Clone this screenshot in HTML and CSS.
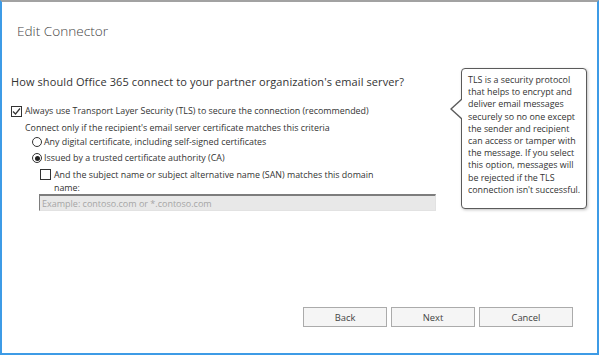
FILE: index.html
```html
<!DOCTYPE html>
<html lang="en">
<head>
    <meta charset="UTF-8">
    <title>Edit Connector</title>
    <link rel="stylesheet" href="styles.css">
</head>
<body>
<div class="window">
    <h1 class="title">Edit Connector</h1>

    <div class="content">
        <p class="question">How should Office 365 connect to your partner organization's email server?</p>

        <div class="option">
            <span class="check checked">
                <svg width="9" height="9" viewBox="0 0 9 9"><path d="M1 4.5 L3.5 7 L8 1.5" fill="none" stroke="#333" stroke-width="1.2"/></svg>
            </span>
            <span>Always use Transport Layer Security (TLS) to secure the connection (recommended)</span>
        </div>
        <div class="sub">
            <p class="hint">Connect only if the recipient's email server certificate matches this criteria</p>
            <div class="option radio-row">
                <span class="radio"></span>
                <span>Any digital certificate, including self-signed certificates</span>
            </div>
            <div class="option radio-row">
                <span class="radio selected"></span>
                <span>Issued by a trusted certificate authority (CA)</span>
            </div>
            <div class="option san">
                <span class="check"></span>
                <span>And the subject name or subject alternative name (SAN) matches this domain name:</span>
            </div>
            <input class="domain" type="text" placeholder="Example: contoso.com or *.contoso.com">
        </div>
    </div>

    <div class="tooltip">
        TLS is a security protocol<br>
        that helps to encrypt and<br>
        deliver email messages<br>
        securely so no one except<br>
        the sender and recipient<br>
        can access or tamper with<br>
        the message. If you select<br>
        this option, messages will<br>
        be rejected if the TLS<br>
        connection isn't successful.
    </div>

    <div class="buttons">
        <button>Back</button>
        <button>Next</button>
        <button class="wide">Cancel</button>
    </div>
</div>
</body>
</html>
```

FILE: styles.css
```css
body {
    margin: 0;
    background: #fff;
}
.window {
    box-sizing: border-box;
    width: 599px;
    height: 355px;
    border: 2px solid #3d9be6;
    border-top-color: #a2a2a2;
    position: relative;
    display: flex;
    flex-direction: column;
    font-family: "Open Sans", "Noto Sans", sans-serif;
    color: #333;
}
.title {
    margin: 19px 0 0 15px;
    font-size: 13.6px;
    font-weight: 300;
    line-height: 20px;
    color: #444;
}
.content {
    padding: 34px 0 0 9px;
    flex: 1;
}
.question {
    margin: 0 0 16px 0;
    font-size: 11px;
    line-height: 14px;
    letter-spacing: 0.1px;
    color: #333;
}
.option {
    display: flex;
    align-items: flex-start;
    gap: 3px;
    font-size: 8.9px;
    line-height: 12px;
}
.check {
    box-sizing: border-box;
    flex: none;
    width: 11px;
    height: 11px;
    margin-top: 1px;
    border: 1px solid #333;
    display: flex;
    align-items: center;
    justify-content: center;
}
.sub {
    padding-left: 14px;
}
.hint {
    margin: 5px 0 2px 0;
    font-size: 8.9px;
    line-height: 12px;
}
.radio-row {
    margin-left: 7px;
    margin-bottom: 4px;
    gap: 2px;
}
.radio {
    box-sizing: border-box;
    flex: none;
    width: 10px;
    height: 10px;
    margin-top: 1px;
    border: 1px solid #333;
    border-radius: 50%;
    display: flex;
    align-items: center;
    justify-content: center;
}
.radio.selected::after {
    content: "";
    width: 5px;
    height: 5px;
    border-radius: 50%;
    background: #222;
}
.san {
    margin: 4px 0 0 15px;
    width: 349px;
    line-height: 13px;
}
.domain {
    box-sizing: border-box;
    display: block;
    width: 397px;
    height: 17px;
    margin: 0 0 0 14px;
    padding: 0 2px;
    border: 1px solid #e2e2e2;
    border-top: 2px solid #7d7d7d;
    border-left: 1px solid #7d7d7d;
    background: #e8e8e8;
    font-family: "Open Sans", sans-serif;
    font-size: 9px;
}
.domain::placeholder {
    color: #a6a6a6;
}
.tooltip {
    position: absolute;
    left: 459px;
    top: 66px;
    width: 126px;
    height: 141px;
    box-sizing: border-box;
    padding: 5px 0 0 6px;
    border: 1px solid #5a5a5a;
    border-radius: 4px;
    box-shadow: 1px 1px 3px rgba(0, 0, 0, 0.25);
    background: #fff;
    font-size: 8.9px;
    line-height: 12.2px;
    color: #333;
    white-space: nowrap;
}
.tooltip::before,
.tooltip::after {
    content: "";
    position: absolute;
    border-style: solid;
    border-color: transparent;
}
.tooltip::before {
    left: -12px;
    top: 29px;
    border-width: 11px 12px 11px 0;
    border-right-color: #5a5a5a;
}
.tooltip::after {
    left: -10px;
    top: 30px;
    border-width: 10px 11px 10px 0;
    border-right-color: #fff;
}
.buttons {
    display: flex;
    justify-content: flex-end;
    gap: 4px;
    padding: 0 24px 26px 0;
}
button {
    box-sizing: border-box;
    width: 84px;
    height: 20px;
    border: 1px solid #ababab;
    background: #f5f5f5;
    font-family: "Open Sans", sans-serif;
    font-size: 9.4px;
    color: #444;
    padding: 0;
}
button.wide {
    width: 94px;
}
```
